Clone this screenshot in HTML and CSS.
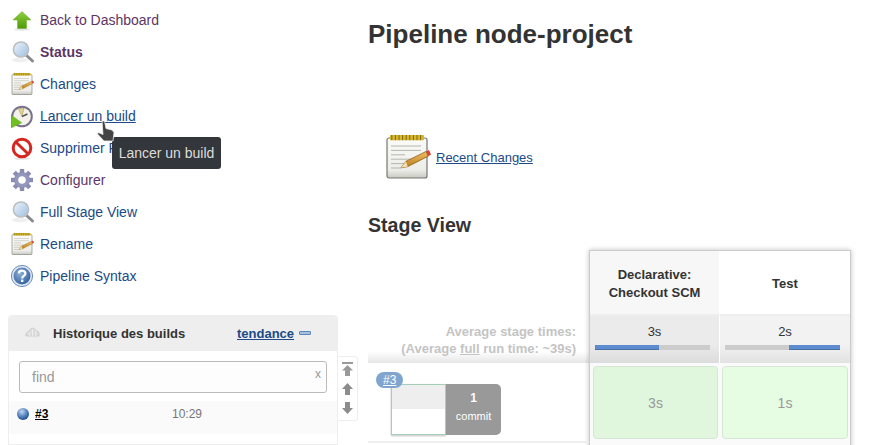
FILE: index.html
```html
<!DOCTYPE html>
<html lang="en">
<head>
    <title>node-project [Jenkins]</title>
    <meta charset="utf-8">
    <link rel="stylesheet" href="styles.css">
</head>
<body>
    <!-- Shared icons -->
    <svg class="defs" width="0" height="0">
        <defs>
            <linearGradient id="glass" x1="0" y1="0" x2="1" y2="1">
                <stop offset="0" stop-color="#eef5fb"/>
                <stop offset="1" stop-color="#9dbde0"/>
            </linearGradient>
            <linearGradient id="arrowGreen" x1="0" y1="0" x2="0" y2="1">
                <stop offset="0" stop-color="#8fd13f"/>
                <stop offset="1" stop-color="#4e9a06"/>
            </linearGradient>
            <linearGradient id="paper" x1="0" y1="0" x2="0" y2="1">
                <stop offset="0" stop-color="#fbfbf9"/>
                <stop offset="0.8" stop-color="#ecece8"/>
                <stop offset="1" stop-color="#c9c9c3"/>
            </linearGradient>
            <linearGradient id="pencil" x1="0" y1="0" x2="0" y2="1">
                <stop offset="0" stop-color="#f0c062"/>
                <stop offset="1" stop-color="#b9791c"/>
            </linearGradient>
            <radialGradient id="helpBlue" cx="0.4" cy="0.35" r="0.7">
                <stop offset="0" stop-color="#8fb0d8"/>
                <stop offset="1" stop-color="#2f5f9f"/>
            </radialGradient>
            <radialGradient id="ballBlue" cx="0.4" cy="0.3" r="0.7">
                <stop offset="0" stop-color="#c4d8ef"/>
                <stop offset="0.55" stop-color="#5c8ac4"/>
                <stop offset="1" stop-color="#1f4f8f"/>
            </radialGradient>
            <symbol id="icon-up" viewBox="0 0 24 24">
                <ellipse cx="11" cy="21.5" rx="8" ry="1.2" fill="#e4e4e4"/>
                <path d="M11 3.5 L20 12 H15.5 V20.5 H6.5 V12 H2 Z" fill="url(#arrowGreen)" stroke="#6ea92a" stroke-width="0.5"/>
            </symbol>
            <symbol id="icon-search" viewBox="0 0 24 24">
                <ellipse cx="9" cy="20" rx="8" ry="2.2" fill="#efefef"/>
                <path d="M15 15 L21.5 21" stroke="#8a8a8a" stroke-width="3" stroke-linecap="round"/>
                <circle cx="10" cy="9.5" r="7.6" fill="url(#glass)" stroke="#b9bec3" stroke-width="1.5"/>
            </symbol>
            <symbol id="icon-notepad" viewBox="0 0 24 24">
                <rect x="1" y="2.5" width="20" height="20" rx="1" fill="url(#paper)" stroke="#77776f" stroke-width="0.6"/>
                <rect x="2.5" y="1" width="17" height="2.6" rx="0.4" fill="#d8b62e"/>
                <path d="M3.4 1 V3.6 M5.2 1 V3.6 M7 1 V3.6 M8.8 1 V3.6 M10.6 1 V3.6 M12.4 1 V3.6 M14.2 1 V3.6 M16 1 V3.6 M17.8 1 V3.6" stroke="#7a6a12" stroke-width="0.5"/>
                <path d="M3 6.5 H18 M3 8.7 H18 M3 10.9 H10 M3 13.1 H16 M3 15.3 H10 M3 17.5 H8" stroke="#b5b5ae" stroke-width="0.5"/>
                <path d="M8 17.4 L10.4 14.2 L20.6 9.2 L21.6 11.6 L11.4 16.8 Z" fill="url(#pencil)" stroke="#8f6010" stroke-width="0.4"/>
                <path d="M8 17.4 L10.4 14.2 L11.4 16.8 Z" fill="#f3dfb4"/>
                <path d="M20.6 9.2 L21.6 11.6 L23 10.8 L22 8.5 Z" fill="#d9433a"/>
            </symbol>
            <symbol id="icon-build" viewBox="0 0 24 24">
                <circle cx="11" cy="12.5" r="10.8" fill="#77728f"/>
                <circle cx="11" cy="12.5" r="8.8" fill="#f4f1ea"/>
                <path d="M11 12.5 L7.5 4.8 L13 4.2 Z" fill="#e3d48f" stroke="#9a8f55" stroke-width="0.5"/>
                <path d="M11 12.5 L16.5 10" stroke="#55534d" stroke-width="1.4"/>
                <path d="M0 11 L10.7 18.7 L0 24 Z" fill="#6fc021" stroke="#4e9a06" stroke-width="0.4"/>
            </symbol>
            <symbol id="icon-stop" viewBox="0 0 24 24">
                <ellipse cx="11" cy="22.6" rx="8" ry="1.1" fill="#e4e4e4"/>
                <circle cx="11" cy="12" r="8.8" fill="#fff" stroke="#d5271f" stroke-width="3"/>
                <path d="M4.8 6 L17.2 18" stroke="#d5271f" stroke-width="3"/>
            </symbol>
            <symbol id="icon-gear" viewBox="0 0 24 24">
                <path d="M11 12 m-8 0 a8 8 0 1 0 16 0 a8 8 0 1 0 -16 0 Z M11 12 m-3.8 0 a3.8 3.8 0 1 1 7.6 0 a3.8 3.8 0 1 1 -7.6 0 Z" fill="#9496bc" fill-rule="evenodd"/>
                <g fill="#8a8db3">
                    <rect x="8.8" y="1" width="4.4" height="4"/>
                    <rect x="8.8" y="19" width="4.4" height="4"/>
                    <rect x="0" y="9.8" width="4" height="4.4"/>
                    <rect x="18" y="9.8" width="4" height="4.4"/>
                    <rect x="8.8" y="1" width="4.4" height="4" transform="rotate(45 11 12)"/>
                    <rect x="8.8" y="19" width="4.4" height="4" transform="rotate(45 11 12)"/>
                    <rect x="0" y="9.8" width="4" height="4.4" transform="rotate(45 11 12)"/>
                    <rect x="18" y="9.8" width="4" height="4.4" transform="rotate(45 11 12)"/>
                </g>
            </symbol>
            <symbol id="icon-help" viewBox="0 0 24 24">
                <circle cx="11" cy="12" r="10.6" fill="#dfe7f0" stroke="#6f8fb8" stroke-width="1"/>
                <circle cx="11" cy="12" r="8.5" fill="url(#helpBlue)"/>
                <path d="M7.8 9.4 C8 5.8 14.4 5.8 14.4 9.6 C14.4 12 11.2 11.8 11.2 14.4" fill="none" stroke="#fff" stroke-width="2.2"/>
                <rect x="10" y="15.6" width="2.4" height="2.4" fill="#fff"/>
            </symbol>
        </defs>
    </svg>

    <aside class="side">
        <ul class="tasks">
            <li><svg class="task-icon"><use href="#icon-up"/></svg><a class="visited" href="#">Back to Dashboard</a></li>
            <li><svg class="task-icon"><use href="#icon-search"/></svg><a class="visited bold" href="#">Status</a></li>
            <li><svg class="task-icon"><use href="#icon-notepad"/></svg><a href="#">Changes</a></li>
            <li><svg class="task-icon"><use href="#icon-build"/></svg><a class="hovered" href="#">Lancer un build</a></li>
            <li><svg class="task-icon"><use href="#icon-stop"/></svg><a href="#">Supprimer Pipeline</a></li>
            <li><svg class="task-icon"><use href="#icon-gear"/></svg><a class="visited" href="#">Configurer</a></li>
            <li><svg class="task-icon"><use href="#icon-search"/></svg><a href="#">Full Stage View</a></li>
            <li><svg class="task-icon"><use href="#icon-notepad"/></svg><a href="#">Rename</a></li>
            <li><svg class="task-icon"><use href="#icon-help"/></svg><a href="#">Pipeline Syntax</a></li>
        </ul>

        <div class="history-wrap">
            <section class="history">
                <div class="history-head">
                    <svg class="cloud" viewBox="0 0 16 12">
                        <path d="M1 11 C0 8 2 6 4 6 C5 2 10 1 12 5 C15 5 16 9 15 11 Z" fill="#dcdcdc" stroke="#bdbdbd" stroke-width="0.6"/>
                        <path d="M4 6 L5 11 M8 3.5 V11 M12 5 L11 11" stroke="#f4f4f4" stroke-width="0.8"/>
                    </svg>
                    <span class="history-title">Historique des builds</span>
                    <a class="trend" href="#">tendance</a>
                    <span class="trend-icon"></span>
                </div>
                <div class="search">
                    <span>find</span>
                    <span class="search-x">x</span>
                </div>
                <div class="build-row">
                    <svg class="ball" viewBox="0 0 12 12"><circle cx="6" cy="6" r="6" fill="url(#ballBlue)"/></svg>
                    <a class="build-link" href="#">#3</a>
                    <span class="build-time">10:29</span>
                </div>
            </section>
            <div class="scroller">
                <svg class="scroll-top" viewBox="0 0 11 14"><path d="M0 0 H11 V2 H0 Z M5.5 3 L11 8.5 H8 V14 H3 V8.5 H0 Z" fill="#999"/></svg>
                <svg viewBox="0 0 11 12"><path d="M5.5 0 L11 6 H8 V12 H3 V6 H0 Z" fill="#8c8c8c"/></svg>
                <svg viewBox="0 0 11 12"><path d="M5.5 12 L11 6 H8 V0 H3 V6 H0 Z" fill="#8c8c8c"/></svg>
            </div>
        </div>
    </aside>

    <main class="main">
        <h1>Pipeline node-project</h1>
        <div class="recent">
            <svg class="recent-icon"><use href="#icon-notepad"/></svg>
            <a href="#">Recent Changes</a>
        </div>
        <h2>Stage View</h2>

        <div class="stage">
            <div class="stage-left">
                <div class="avg-label">
                    Average stage times:<br>
                    (Average <u>full</u> run time: ~39s)
                </div>
                <div class="run">
                    <span class="run-badge">#3</span>
                    <div class="run-box"><div class="run-box-top"></div></div>
                    <div class="run-commits"><b>1</b><span>commit</span></div>
                </div>
            </div>
            <div class="stage-table">
                <div class="head-cell odd">Declarative:<br>Checkout SCM</div>
                <div class="head-cell">Test</div>
                <div class="avg-cell odd">
                    <span>3s</span>
                    <div class="bar"><div class="bar-fill" style="width: 56%"></div></div>
                </div>
                <div class="avg-cell">
                    <span>2s</span>
                    <div class="bar bar-end"><div class="bar-fill" style="width: 44%"></div></div>
                </div>
                <div class="result-cell"><div class="result first">3s</div></div>
                <div class="result-cell"><div class="result">1s</div></div>
                <div class="result-cell"></div>
                <div class="result-cell"></div>
            </div>
        </div>
    </main>

    <!-- Hover state captured in the screenshot -->
    <div class="tooltip">Lancer un build</div>
    <svg class="cursor" viewBox="0 0 20 24">
        <path d="M6 1 L8.5 1 L10 8.5 L16 10 L18 12.5 L17 21 H8 L1.5 14 L2.5 12.5 L7 14.5 Z" fill="#444" stroke="#eee" stroke-width="0.8"/>
    </svg>
</body>
</html>
```

FILE: styles.css
```css
/* General styling */
html, body {
    height: 445px;
    overflow: hidden;
}

body {
    font-family: "Liberation Sans", Arial, sans-serif;
    font-size: 14px;
    margin: 0;
    padding: 0;
    background-color: white;
    color: #333;
    display: flex;
    position: relative;
}

a {
    color: #204a87;
}

.defs {
    position: absolute;
}

/* Sidebar */
.side {
    width: 368px;
    flex-shrink: 0;
    padding-top: 4px;
}

.tasks {
    list-style-type: none;
    margin: 0;
    padding: 0 0 0 11px;
}

.tasks li {
    display: flex;
    align-items: center;
    gap: 5px;
    height: 32px;
}

.tasks a {
    text-decoration: none;
}

.tasks a.visited {
    color: #5c3566;
}

.tasks a.bold {
    font-weight: bold;
}

.tasks a.hovered {
    text-decoration: underline;
}

.task-icon {
    width: 24px;
    height: 24px;
}

/* Build history */
.history-wrap {
    display: flex;
    margin: 23px 0 0 8px;
}

.history {
    width: 330px;
    height: 130px;
    box-sizing: border-box;
    border: 1px solid #eee;
    border-top: none;
    border-radius: 4px 4px 0 0;
}

.history-head {
    display: flex;
    align-items: center;
    height: 36px;
    background-color: #eee;
    border-radius: 4px 4px 0 0;
    padding-left: 16px;
    font-size: 13px;
    font-weight: bold;
}

.cloud {
    width: 15px;
    height: 11px;
    margin-bottom: 3px;
}

.history-title {
    margin-left: 13px;
    width: 184px;
}

.trend {
    font-size: 13px;
}

.trend-icon {
    width: 12px;
    height: 4px;
    margin-left: 5px;
    background-color: #a9bfdc;
    border: 1px solid #5c86bd;
    box-sizing: border-box;
    border-radius: 1px;
}

.search {
    display: flex;
    justify-content: space-between;
    align-items: center;
    height: 32px;
    box-sizing: border-box;
    margin: 10px 10px 8px;
    padding: 0 5px 0 12px;
    border: 1px solid #bbb;
    border-radius: 3px;
    background-color: #fdfdfd;
    color: #999;
}

.search-x {
    font-size: 12px;
    margin-bottom: 6px;
}

.build-row {
    display: flex;
    align-items: center;
    height: 33px;
    padding: 0 0 8px 8px;
    box-sizing: border-box;
    background-color: #fafafa;
    font-size: 12px;
}

.ball {
    width: 12px;
    height: 12px;
}

.build-link {
    color: #000;
    font-weight: bold;
    margin-left: 6px;
    width: 137px;
}

.build-time {
    color: #777;
    font-size: 12px;
}

.scroller {
    display: flex;
    flex-direction: column;
    align-items: center;
    gap: 7px;
    align-self: flex-start;
    width: 20px;
    height: 65px;
    box-sizing: border-box;
    margin-top: 41px;
    padding-top: 5px;
    border: 1px solid #eee;
    border-left: none;
    border-radius: 0 3px 3px 0;
}

.scroller svg {
    width: 11px;
    height: 12px;
    flex-shrink: 0;
}

.scroller .scroll-top {
    height: 14px;
}

/* Main column */
.main {
    flex: 1;
}

h1 {
    font-size: 26px;
    line-height: 30px;
    margin: 19px 0 0;
}

.recent {
    display: flex;
    align-items: center;
    gap: 3px;
    margin: 84px 0 0 17px;
    font-size: 13px;
}

.recent-icon {
    width: 48px;
    height: 48px;
}

h2 {
    font-size: 19.6px;
    line-height: 24px;
    margin: 32px 0 0;
}

/* Stage view */
.stage {
    display: flex;
    margin-top: 13px;
}

.stage-left {
    width: 221px;
    padding-top: 66px;
}

.avg-label {
    height: 47px;
    box-sizing: border-box;
    padding: 7px 13px 0 0;
    text-align: right;
    font-size: 13px;
    line-height: 17px;
    font-weight: bold;
    color: #c4c4c4;
    background: linear-gradient(to bottom, white 75%, #e6e6e6);
}

.run {
    display: flex;
    position: relative;
    height: 80px;
    box-sizing: border-box;
    padding: 21px 0 0 23px;
    border-bottom: 2px solid #eee;
}

.run-badge {
    position: absolute;
    top: 9px;
    left: 8px;
    padding: 0 7px;
    height: 16px;
    line-height: 16px;
    font-size: 12px;
    color: white;
    text-decoration: underline;
    background-color: #7fa5cf;
    border-radius: 8px;
    z-index: 1;
}

.run-box {
    width: 55px;
    height: 51px;
    box-sizing: border-box;
    border: 1px solid #a5cfb8;
    box-shadow: 0 1px 2px rgba(0, 0, 0, 0.25);
}

.run-box-top {
    height: 24px;
    background-color: #eee;
}

.run-commits {
    display: flex;
    flex-direction: column;
    align-items: center;
    gap: 5px;
    width: 55px;
    height: 51px;
    padding-top: 7px;
    box-sizing: border-box;
    background-color: #999;
    border-radius: 0 5px 5px 0;
    color: white;
    font-size: 11px;
}

.run-commits b {
    font-size: 12px;
}

.stage-table {
    display: grid;
    grid-template-columns: 130px 130px;
    grid-template-rows: 65px 47px 78px 20px;
    align-self: flex-start;
    border: 1px solid #ccc;
    box-shadow: 0 0 5px rgba(0, 0, 0, 0.25);
}

.head-cell {
    display: flex;
    align-items: center;
    justify-content: center;
    text-align: center;
    font-size: 13px;
    line-height: 18px;
    font-weight: bold;
    padding-top: 2px;
    box-sizing: border-box;
    background-color: white;
    border-bottom: 2px solid #eee;
}

.head-cell.odd {
    background-color: #f7f7f7;
    border-right: 1px solid white;
}

.avg-cell {
    display: flex;
    flex-direction: column;
    align-items: center;
    padding-top: 8px;
    font-size: 13px;
    background: linear-gradient(to bottom, #f2f2f2 60%, #e2e2e2);
}

.avg-cell.odd {
    background: linear-gradient(to bottom, #ebebeb 60%, #dcdcdc);
    border-right: 1px solid white;
}

.bar {
    display: flex;
    width: 115px;
    height: 5px;
    margin: 6px 5px 0 0;
    background-color: #ccc;
}

.bar-end {
    justify-content: flex-end;
}

.bar-fill {
    background-color: #5c8bd0;
    border-bottom: 1px solid #47719f;
    box-sizing: border-box;
}

.result-cell {
    padding: 3px 2px 2px;
    background-color: #fafafa;
}

.result {
    display: flex;
    align-items: center;
    justify-content: center;
    height: 100%;
    box-sizing: border-box;
    border: 1px solid #d6e6d4;
    border-radius: 4px;
    background-color: #e6fde3;
    color: #999;
    font-size: 14px;
}

.result.first {
    background-color: #e0f7de;
    margin-left: 1px;
}

/* Overlays */
.tooltip {
    position: absolute;
    left: 112px;
    top: 137px;
    width: 109px;
    height: 32px;
    line-height: 32px;
    text-align: center;
    background-color: #33363a;
    color: #ddd;
    border-radius: 3px;
}

.cursor {
    position: absolute;
    left: 96px;
    top: 120px;
    width: 20px;
    height: 24px;
}
```
